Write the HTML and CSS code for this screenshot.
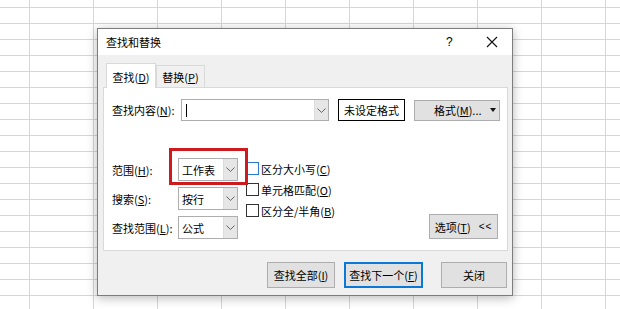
FILE: index.html
```html
<!DOCTYPE html>
<html lang="zh-CN">
<head>
<meta charset="utf-8">
<title>查找和替换</title>
<link rel="stylesheet" href="styles.css">
</head>
<body>
<div class="dialog">
  <div class="titlebar">
    <span class="title">查找和替换</span>
    <span class="help">?</span>
    <span class="close"><svg width="12" height="12" viewBox="0 0 12 12"><path d="M1 1 L11 11 M11 1 L1 11" stroke="#111" stroke-width="1.1" fill="none"/></svg></span>
  </div>
  <div class="body">
    <div class="tabs">
      <div class="tab active">查找(<u>D</u>)</div>
      <div class="tab">替换(<u>P</u>)</div>
    </div>
    <div class="panel">
      <div class="find-row">
        <span class="lbl">查找内容(<u>N</u>):</span>
        <div class="combo">
          <span class="field"><span class="caret"></span></span>
          <span class="dd"><svg width="9" height="5" viewBox="0 0 9 5"><path d="M0.5 0.5 L4.5 4.5 L8.5 0.5" stroke="#666" stroke-width="1" fill="none"/></svg></span>
        </div>
        <div class="preview">未设定格式</div>
        <div class="btn fmt"><span class="fmt-text">格式(<u>M</u>)...</span><span class="tri"></span></div>
      </div>
      <div class="options">
        <div class="selects">
          <div class="srow">
            <span class="lbl">范围(<u>H</u>):</span>
            <div class="select hl">
              <span class="field">工作表</span>
              <span class="dd"><svg width="9" height="5" viewBox="0 0 9 5"><path d="M0.5 0.5 L4.5 4.5 L8.5 0.5" stroke="#666" stroke-width="1" fill="none"/></svg></span>
              <span class="redbox"></span>
            </div>
          </div>
          <div class="srow">
            <span class="lbl">搜索(<u>S</u>):</span>
            <div class="select">
              <span class="field">按行</span>
              <span class="dd"><svg width="9" height="5" viewBox="0 0 9 5"><path d="M0.5 0.5 L4.5 4.5 L8.5 0.5" stroke="#666" stroke-width="1" fill="none"/></svg></span>
            </div>
          </div>
          <div class="srow">
            <span class="lbl">查找范围(<u>L</u>):</span>
            <div class="select">
              <span class="field">公式</span>
              <span class="dd"><svg width="9" height="5" viewBox="0 0 9 5"><path d="M0.5 0.5 L4.5 4.5 L8.5 0.5" stroke="#666" stroke-width="1" fill="none"/></svg></span>
            </div>
          </div>
        </div>
        <div class="checks">
          <div class="check"><span class="box focus"></span>区分大小写(<u>C</u>)</div>
          <div class="check"><span class="box"></span>单元格匹配(<u>O</u>)</div>
          <div class="check"><span class="box"></span>区分全/半角(<u>B</u>)</div>
        </div>
        <div class="btn opt"><span>选项(<u>T</u>)</span><span class="ltlt">&lt;&lt;</span></div>
      </div>
    </div>
    <div class="actions">
      <div class="btn act all">查找全部(<u>I</u>)</div>
      <div class="btn act next">查找下一个(<u>F</u>)</div>
      <div class="btn act closebtn">关闭</div>
    </div>
  </div>
</div>
</body>
</html>
```

FILE: styles.css
```css
html, body {
  margin: 0;
  padding: 0;
}
body {
  width: 620px;
  height: 309px;
  overflow: hidden;
  background-color: #fff;
  background-image:
    linear-gradient(to right, #d6d6d6 0, #d6d6d6 1px, transparent 1px),
    linear-gradient(to bottom, #d6d6d6 0, #d6d6d6 1px, transparent 1px);
  background-size: 64px 100%, 100% 16px;
  background-position: 29px 0, 0 7px;
  font-family: "Noto Sans CJK SC", "Noto Sans", sans-serif;
  font-size: 11px;
  color: #000;
  position: relative;
  white-space: nowrap;
}
* { box-sizing: border-box; }
u { text-decoration: underline; text-underline-offset: 1px; }

.dialog {
  position: absolute;
  left: 97px;
  top: 28px;
  width: 416px;
  height: 268px;
  border: 1px solid #7c7c7c;
  background: #f0f0f0;
  box-shadow: 0 2px 10px rgba(0,0,0,0.28);
  display: flex;
  flex-direction: column;
}
.titlebar {
  height: 26px;
  background: #fff;
  display: flex;
  align-items: center;
  padding-left: 8px;
  flex: none;
}
.title { font-size: 11px; flex: 1; }
.help { width: 14px; font-size: 12px; margin-right: 26px; font-family: "Liberation Sans", sans-serif; }
.close { width: 12px; height: 12px; margin-right: 14px; display: flex; }

.body {
  flex: 1;
  padding: 8px 4px 0 5px;
  display: flex;
  flex-direction: column;
}
.tabs {
  display: flex;
  align-items: flex-end;
  margin-left: 3px;
  height: 24px;
  position: relative;
  z-index: 1;
  flex: none;
}
.tab {
  height: 22px;
  width: 49px;
  display: flex;
  align-items: center;
  justify-content: center;
  border: 1px solid #d9d9d9;
  border-bottom: none;
  background: #f0f0f0;
}
.tab.active {
  height: 25px;
  width: 50px;
  background: #fff;
  margin-bottom: -1px;
  padding-top: 1px;
}
.panel {
  height: 164px;
  background: #fff;
  border: 1px solid #d9d9d9;
  padding: 11px 9px 0 8px;
  display: flex;
  flex-direction: column;
  flex: none;
}
.find-row {
  display: flex;
  align-items: center;
  height: 22px;
}
.lbl {
  width: 69px;
  flex: none;
}
.combo {
  width: 148px;
  height: 22px;
  border: 1px solid #adadad;
  display: flex;
  flex: none;
}
.combo .field { flex: 1; display: flex; align-items: center; padding-left: 4px; }
.caret { width: 1px; height: 13px; background: #000; }
.dd {
  width: 14px;
  background: #e6e6e6;
  border-left: 1px solid #dcdcdc;
  display: flex;
  align-items: center;
  justify-content: center;
}
.preview {
  margin-left: 9px;
  width: 67px;
  height: 22px;
  border: 1px solid #000;
  display: flex;
  align-items: center;
  justify-content: center;
  flex: none;
}
.btn {
  background: #e1e1e1;
  border: 1px solid #adadad;
  display: flex;
  align-items: center;
  justify-content: center;
  flex: none;
}
.fmt {
  margin-left: 9px;
  width: 86px;
  height: 21px;
  justify-content: flex-start;
  padding-left: 19px;
}
.fmt-text { flex: 1; }
.tri {
  width: 0; height: 0;
  border-left: 3.5px solid transparent;
  border-right: 3.5px solid transparent;
  border-top: 4px solid #111;
  margin-right: 3px;
}
.options {
  margin-top: 37px;
  display: flex;
  align-items: flex-start;
}
.selects {
  display: flex;
  flex-direction: column;
  gap: 6px;
  flex: none;
}
.srow {
  display: flex;
  align-items: center;
  height: 23px;
}
.srow .lbl { width: 66px; }
.select {
  width: 60px;
  height: 23px;
  border: 1px solid #adadad;
  display: flex;
  position: relative;
  flex: none;
}
.select .field { flex: 1; display: flex; align-items: center; padding-left: 3px; }
.redbox {
  position: absolute;
  left: -10px;
  top: -11px;
  right: -11px;
  bottom: -5px;
  border: 3px solid #cc1a1f;
}
.checks {
  margin-left: 8px;
  margin-top: 4px;
  display: flex;
  flex-direction: column;
  gap: 8px;
  flex: none;
}
.check {
  display: flex;
  align-items: center;
  height: 13px;
}
.box {
  width: 13px;
  height: 13px;
  border: 1px solid #333;
  background: #fff;
  margin-right: 2px;
  flex: none;
}
.box.focus { border-color: #2a7bd4; }
.opt {
  margin-left: auto;
  margin-top: 56px;
  width: 69px;
  height: 25px;
  gap: 8px;
}
.ltlt { font-family: "Liberation Sans", sans-serif; font-size: 10px; letter-spacing: 1px; }
.actions {
  display: flex;
  justify-content: flex-end;
  margin-top: 11px;
  padding-right: 1px;
}
.act { height: 26px; }
.all { width: 68px; }
.next { width: 79px; margin-left: 9px; border: 2px solid #0a78d7; }
.closebtn { width: 66px; margin-left: 18px; }
```
